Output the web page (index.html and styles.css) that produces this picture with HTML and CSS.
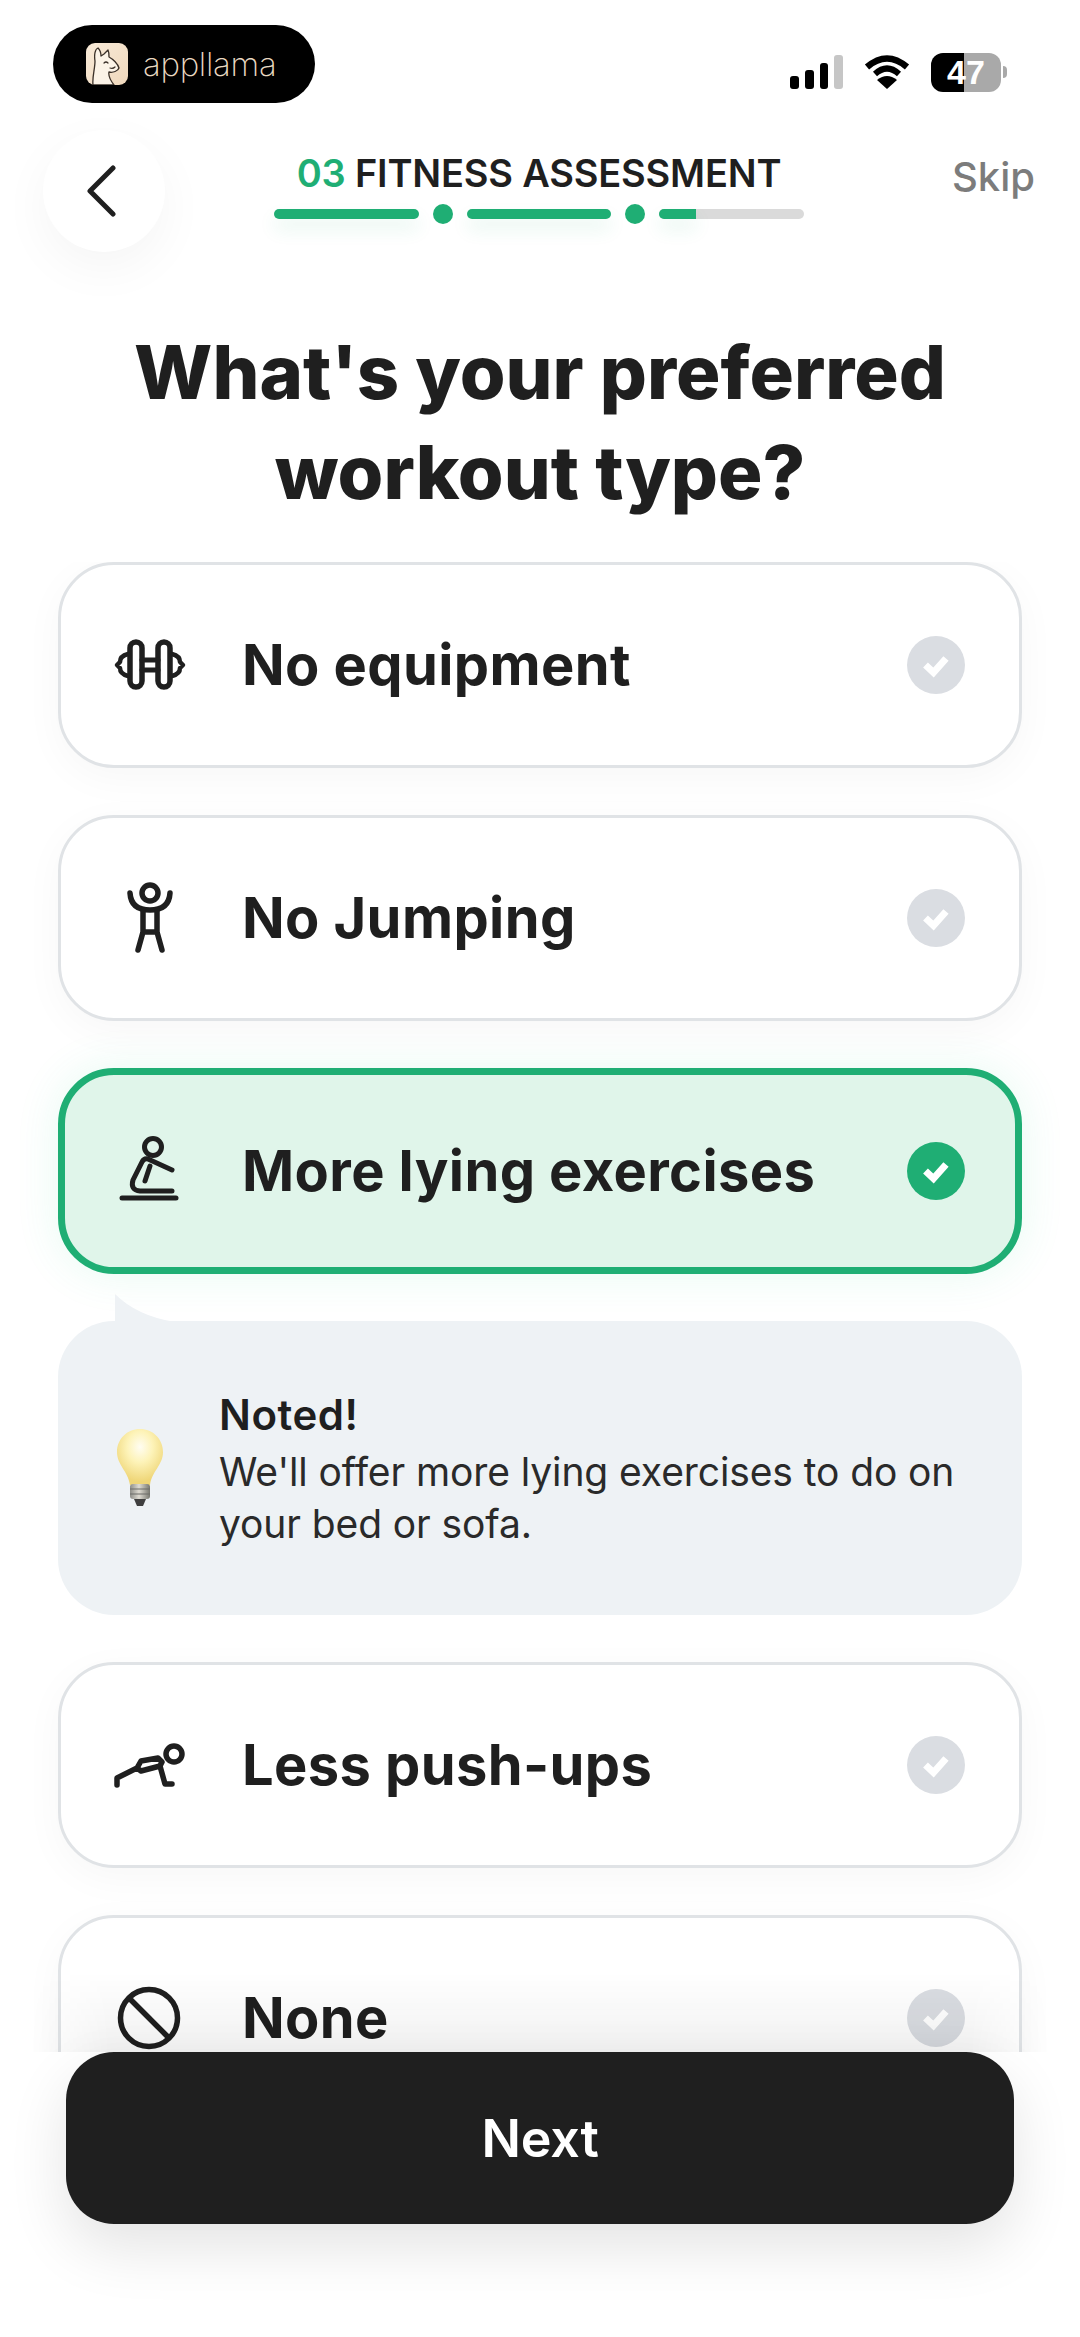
FILE: index.html
```html
<!DOCTYPE html>
<html lang="en">
<head>
<meta charset="utf-8">
<title>Fitness assessment</title>
<link rel="stylesheet" href="styles.css">
</head>
<body>
<div class="page">
  <div class="status">
    <div class="pill">
      <svg class="tile" viewBox="0 0 42 42">
        <defs>
          <linearGradient id="tileBg" x1="0" y1="0" x2="1" y2="1">
            <stop offset="0" stop-color="#f8ead8"/>
            <stop offset="1" stop-color="#efd8bc"/>
          </linearGradient>
        </defs>
        <rect width="42" height="42" rx="9" fill="url(#tileBg)"/>
        <path d="M7 42 C6 34 9 26 9 18 C8 12 9 6 12 5 C14 7 15 10 15 13 L18 11 L22 7 C23 9 23 12 23 14 C27 16 32 21 33 25 C32 28 27 30 23 29 C22 33 25 38 28 42 Z" fill="#fbf3e7" stroke="#3a3028" stroke-width="1.300" stroke-linejoin="round"/>
        <path d="M18 20 q2 -2 4 0 M24 25 q3 1 5 -1" fill="none" stroke="#3a3028" stroke-width="1.200" stroke-linecap="round"/>
      </svg>
      <span class="brand">appllama</span>
    </div>
    <div class="sys">
      <div class="signal"><i class="b1"></i><i class="b2"></i><i class="b3"></i><i class="b4"></i></div>
      <svg class="wifi" viewBox="0 0 46 34">
        <path d="M3 12 Q23 -5 43 12" fill="none" stroke="#000" stroke-width="6.500"/>
        <path d="M11 19 Q23 8 35 19" fill="none" stroke="#000" stroke-width="6"/>
        <path d="M23 34 L13 25 Q23 17 33 25 Z" fill="#000"/>
      </svg>
      <div class="battery"><span>47</span></div>
      <div class="nub"></div>
    </div>
  </div>

  <header class="head">
    <button class="back" type="button">
      <svg viewBox="0 0 30 52" width="30" height="52"><path d="M27 3 L4 26 L27 49" fill="none" stroke="#1f1f1f" stroke-width="5" stroke-linecap="round" stroke-linejoin="round"/></svg>
    </button>
    <div class="prog">
      <div class="prog-title"><span class="num">03</span> FITNESS ASSESSMENT</div>
      <div class="track">
        <div class="seg done"></div><div class="dot"></div>
        <div class="seg done"></div><div class="dot"></div>
        <div class="seg"><div class="fill"></div></div>
      </div>
    </div>
    <div class="skip">Skip</div>
  </header>

  <h1 class="title">What's your preferred<br>workout type?</h1>

  <main class="list">
    <div class="card">
      <svg class="ico" viewBox="0 0 80 80" fill="none" stroke="#1f1f1f" stroke-width="5.500" stroke-linecap="round" stroke-linejoin="round">
        <rect x="20" y="17" width="12" height="45" rx="6"/>
        <rect x="48" y="17" width="12" height="45" rx="6"/>
        <path d="M32 35 H48 M32 45 H48" stroke-width="5"/>
        <path d="M18 29 Q10 31 10 37 L7 40 L10 43 Q10 49 18 51 M62 29 Q70 31 70 37 L73 40 L70 43 Q70 49 62 51" stroke-width="4.500"/>
      </svg>
      <span class="label">No equipment</span>
      <span class="check"><svg viewBox="0 0 58 58"><path d="M18.500 29 L26.500 36.500 L39 22.500" fill="none" stroke="#fff" stroke-width="7"/></svg></span>
    </div>
    <div class="card">
      <svg class="ico" viewBox="0 0 80 80" fill="none" stroke="#1f1f1f" stroke-width="5.500" stroke-linecap="round" stroke-linejoin="round">
        <circle cx="40" cy="15" r="8"/>
        <path d="M20 15 Q21 32 40 32 Q59 32 60 15"/>
        <path d="M33 32 V54 L28 72 M47 32 V54 L52 72 M33 54 H47"/>
      </svg>
      <span class="label">No Jumping</span>
      <span class="check"><svg viewBox="0 0 58 58"><path d="M18.500 29 L26.500 36.500 L39 22.500" fill="none" stroke="#fff" stroke-width="7"/></svg></span>
    </div>
    <div class="card on">
      <svg class="ico" viewBox="0 0 80 80" fill="none" stroke="#1f1f1f" stroke-width="5" stroke-linecap="round" stroke-linejoin="round">
        <circle cx="43" cy="16" r="8.500"/>
        <path d="M62 39 L38 28 Q34 27 32 31 L23 49 Q20 59 30 60 H62"/>
        <path d="M40 35 L35 50"/>
        <path d="M12 67 H66"/>
      </svg>
      <span class="label">More lying exercises</span>
      <span class="check"><svg viewBox="0 0 58 58"><path d="M18.500 29 L26.500 36.500 L39 22.500" fill="none" stroke="#fff" stroke-width="7"/></svg></span>
    </div>
    <div class="tip">
      <svg class="bulb" viewBox="0 0 46 78">
        <defs>
          <radialGradient id="glass" cx="50%" cy="32%" r="62%">
            <stop offset="0" stop-color="#fffdf2"/>
            <stop offset=".45" stop-color="#fdf3b8"/>
            <stop offset="1" stop-color="#efd678"/>
          </radialGradient>
          <linearGradient id="metal" x1="0" y1="0" x2="1" y2="0">
            <stop offset="0" stop-color="#8d8d88"/>
            <stop offset=".45" stop-color="#dedbd2"/>
            <stop offset="1" stop-color="#77776f"/>
          </linearGradient>
        </defs>
        <path d="M23 0 C10 0 0 10 0 23 C0 36 11 42 13 56 H33 C35 42 46 36 46 23 C46 10 36 0 23 0 Z" fill="url(#glass)"/>
        <rect x="13" y="55" width="20" height="15" rx="3" fill="url(#metal)"/>
        <path d="M13 60 H33 M13 65 H33" stroke="#6d6d68" stroke-width="1"/>
        <path d="M17 70 H29 L26 77 H20 Z" fill="#3f3f3f"/>
      </svg>
      <div class="tip-text">
        <div class="tip-head">Noted!</div>
        <div class="tip-body">We'll offer more lying exercises to do on your bed or sofa.</div>
      </div>
    </div>
    <div class="card">
      <svg class="ico" viewBox="0 0 80 80" fill="none" stroke="#1f1f1f" stroke-width="5.500" stroke-linecap="round" stroke-linejoin="round">
        <circle cx="64" cy="29" r="8"/>
        <path d="M7 60 V53 L27 43 L31 36 L48 33 L52 37 L50 41 L31 46 L27 43"/>
        <path d="M50 41 L55 59 H62"/>
      </svg>
      <span class="label">Less push-ups</span>
      <span class="check"><svg viewBox="0 0 58 58"><path d="M18.500 29 L26.500 36.500 L39 22.500" fill="none" stroke="#fff" stroke-width="7"/></svg></span>
    </div>
    <div class="card">
      <svg class="ico" viewBox="0 0 80 80" fill="none" stroke="#1f1f1f" stroke-width="5.500">
        <circle cx="39" cy="40" r="28.500"/>
        <path d="M19 20 L59 60"/>
      </svg>
      <span class="label">None</span>
      <span class="check"><svg viewBox="0 0 58 58"><path d="M18.500 29 L26.500 36.500 L39 22.500" fill="none" stroke="#fff" stroke-width="7"/></svg></span>
    </div>
    <div class="fade"></div>
  </main>

  <footer class="foot">
    <button class="next" type="button">Next</button>
  </footer>
</div>
</body>
</html>
```

FILE: styles.css
```css
* { box-sizing: border-box; }
html, body { margin: 0; padding: 0; background: #fff; }
body { font-family: "Inter", "Noto Sans", sans-serif; color: #1f1f1f; }

.page {
  width: 1080px;
  height: 2337px;
  display: flex;
  flex-direction: column;
  overflow: hidden;
  background: #fff;
}

/* status bar */
.status {
  height: 130px;
  flex: none;
  padding: 25px 73px 0 53px;
  display: flex;
  justify-content: space-between;
  align-items: flex-start;
}
.pill {
  width: 262px;
  height: 78px;
  border-radius: 39px;
  background: #000;
  display: flex;
  align-items: center;
  padding-left: 33px;
  gap: 15px;
}
.tile { width: 42px; height: 42px; flex: none; }
.brand {
  font-family: "Inter", sans-serif;
  font-weight: 200;
  font-size: 33px;
  letter-spacing: -.3px;
  color: #e9d8c2;
}
.sys {
  display: flex;
  align-items: center;
  margin-top: 27px;
  height: 40px;
}
.signal { display: flex; align-items: flex-end; gap: 6px; height: 34px; width: 53px; margin-right: 21px; }
.signal i { display: block; width: 9px; border-radius: 3px; background: #000; }
.signal .b1 { height: 13px; }
.signal .b2 { height: 19px; }
.signal .b3 { height: 26px; }
.signal .b4 { height: 34px; background: #c6c6c6; }
.wifi { width: 46px; height: 34px; margin-right: 21px; }
.battery {
  width: 70px;
  height: 39px;
  border-radius: 12px;
  background: linear-gradient(90deg, #000 0, #000 47%, #a9a9a9 47%, #a9a9a9 100%);
  display: flex;
  align-items: center;
  justify-content: center;
}
.battery span {
  font-family: "Liberation Sans", sans-serif;
  font-weight: 700;
  font-size: 34px;
  color: #fff;
}
.nub { width: 4px; height: 12px; margin-left: 2px; background: #a9a9a9; border-radius: 0 4px 4px 0; }

/* header */
.head {
  flex: none;
  height: 122px;
  padding: 0 45px 0 43px;
  display: grid;
  grid-template-columns: 1fr 530px 1fr;
  align-items: start;
}
.back {
  width: 122px;
  height: 122px;
  border: 0;
  padding: 0 6px 0 0;
  border-radius: 50%;
  background: #fff;
  box-shadow: 0 16px 50px rgba(0, 0, 0, .045);
  display: flex;
  align-items: center;
  justify-content: center;
}
.prog { padding-top: 22px; display: flex; flex-direction: column; align-items: center; }
.prog-title {
  font-size: 38px;
  font-weight: 600;
  line-height: 42px;
  letter-spacing: -.2px;
  white-space: nowrap;
  color: #1f1f1f;
}
.num { color: #1fae74; }
.track { width: 530px; margin-top: 9px; display: flex; align-items: center; height: 21px; gap: 14px; }
.seg { flex: 1; height: 10px; border-radius: 5px; background: #dadada; }
.seg.done { background: #1fae74; box-shadow: 0 10px 18px rgba(31, 174, 116, .12); }
.fill { width: 25%; height: 100%; border-radius: 5px 0 0 5px; background: #1fae74; box-shadow: 0 10px 18px rgba(31, 174, 116, .12); }
.dot { width: 20px; height: 20px; border-radius: 50%; background: #1fae74; flex: none; }
.skip {
  justify-self: end;
  margin-top: 23px;
  font-size: 40px;
  font-weight: 500;
  line-height: 48px;
  color: #7c7c7c;
}

/* heading */
.title {
  flex: none;
  margin: 70px 0 40px;
  text-align: center;
  font-size: 74px;
  font-weight: 800;
  line-height: 100px;
  letter-spacing: 0;
  color: #1f1f1f;
}

/* options */
.list {
  flex: 1;
  min-height: 0;
  position: relative;
  overflow: hidden;
  padding: 0 58px;
  display: flex;
  flex-direction: column;
  gap: 47px;
}
.card {
  flex: none;
  height: 206px;
  border: 3px solid #e0e3e6;
  border-radius: 56px;
  background: #fff;
  box-shadow: 0 10px 40px rgba(0, 0, 0, .035);
  display: flex;
  align-items: center;
  padding: 0 54px 0 49px;
}
.ico { width: 80px; height: 80px; flex: none; }
.label {
  flex: 1;
  margin-left: 52px;
  font-size: 56px;
  font-weight: 650;
  letter-spacing: .4px;
  color: #1f1f1f;
  white-space: nowrap;
}
.check { width: 58px; height: 58px; border-radius: 50%; background: #dadde2; flex: none; }
.check svg { display: block; width: 58px; height: 58px; }
.card.on {
  border: 7px solid #1fae74;
  background: #e0f5ea;
  box-shadow: 0 0 44px rgba(60, 210, 150, .12);
  padding: 0 50px 0 45px;
}
.card.on .check { background: #1fae74; }

.tip {
  flex: none;
  height: 294px;
  position: relative;
  border-radius: 56px;
  background: #eef2f5;
  display: flex;
  align-items: center;
  padding: 0 30px 0 59px;
  gap: 56px;
}
.tip::before {
  content: "";
  position: absolute;
  left: 57px;
  top: -27px;
  width: 60px;
  height: 28px;
  background: #eef2f5;
  clip-path: path("M0 0 Q22 22 60 28 L0 28 Z");
}
.tip-text { padding-top: 4px; }
.bulb { width: 46px; height: 78px; flex: none; }
.tip-head { font-size: 42px; font-weight: 600; line-height: 50px; letter-spacing: .5px; margin-bottom: 6px; }
.tip-body { font-size: 39px; font-weight: 400; line-height: 52px; letter-spacing: -.1px; color: #2a2a2a; }

.fade {
  position: absolute;
  left: 0;
  right: 0;
  bottom: 0;
  height: 80px;
  background: linear-gradient(rgba(0, 0, 0, 0), rgba(0, 0, 0, .055));
  -webkit-mask-image: linear-gradient(90deg, transparent 30px, #000 110px, #000 970px, transparent 1050px);
  mask-image: linear-gradient(90deg, transparent 30px, #000 110px, #000 970px, transparent 1050px);
  pointer-events: none;
}

/* footer */
.foot {
  flex: none;
  height: 285px;
  padding: 0 66px;
  background: #fff;
  position: relative;
}
.next {
  display: block;
  width: 100%;
  height: 172px;
  border: 0;
  border-radius: 48px;
  background: #1f1f1f;
  box-shadow: 0 24px 60px rgba(0, 0, 0, .11);
  color: #fff;
  font-family: inherit;
  font-size: 52px;
  font-weight: 600;
  letter-spacing: -.2px;
}
```
